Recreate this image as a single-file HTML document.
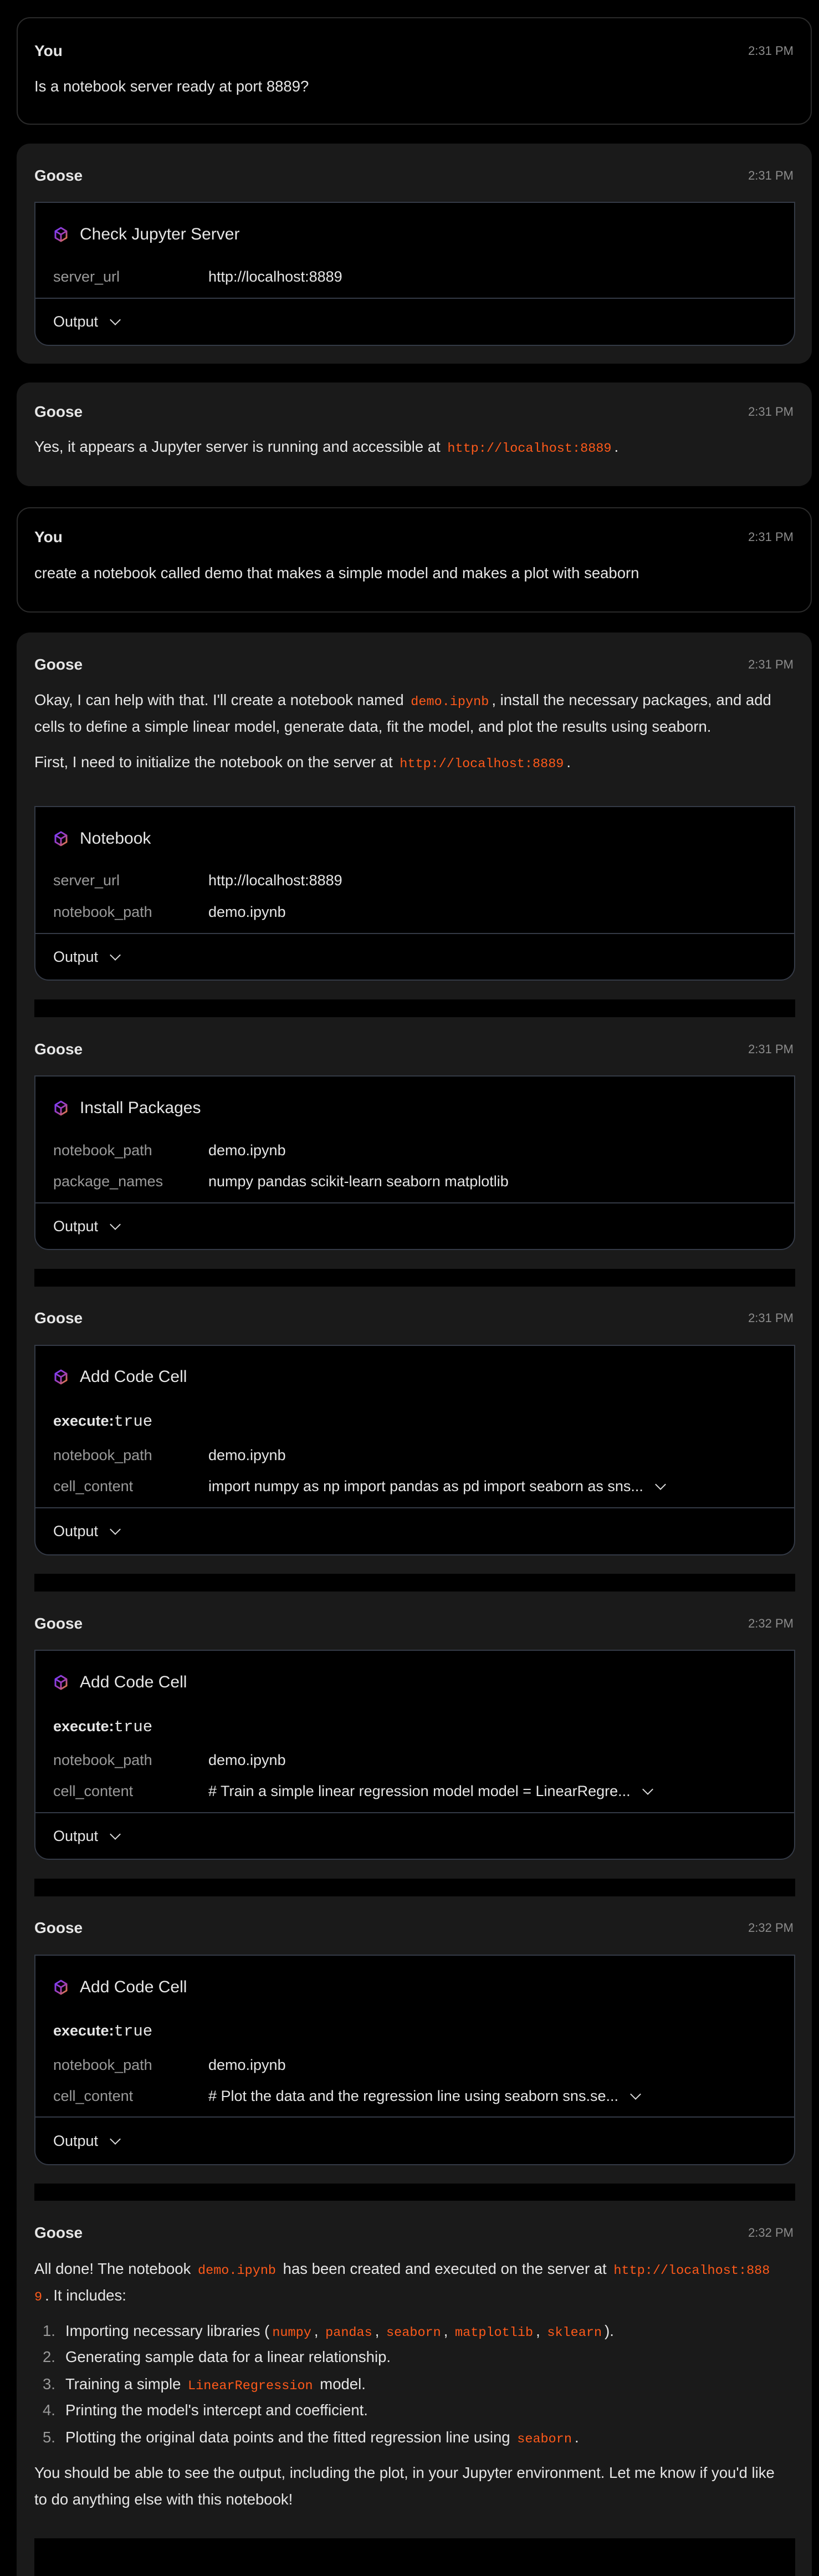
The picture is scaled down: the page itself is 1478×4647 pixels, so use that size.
<!DOCTYPE html>
<html><head><meta charset="utf-8"><style>
*{margin:0;padding:0;box-sizing:border-box}
html,body{width:1478px;height:4647px;background:#000;overflow:hidden}
body{position:relative;font-family:"Liberation Sans",sans-serif;color:#e6e6e6;font-size:27.5px}
.a{position:absolute;white-space:nowrap;height:40px;line-height:40px}
.card{position:absolute;left:30px;width:1435px;border-radius:24px;background:#1a1a1a}
.you{background:#000;border:2px solid #2a2a2a}
.who{font-weight:bold;font-size:28px;left:62px}
.ts{right:46px;color:#8c8c8c;font-size:22px}
.box{position:absolute;left:62px;width:1373px;border:2px solid #343a46;border-radius:0 0 26px 26px;background:#000}
.div{position:absolute;left:62px;width:1373px;height:2px;background:#343a46}
.bar{position:absolute;left:62px;width:1373px;background:#000}
.lbl{left:96px;color:#9a9a9a;font-size:27px}
.val{left:376px;font-size:27px}
.title{left:144px;font-size:30px}
.ic{position:absolute;left:96px;width:28px;height:30px}
code{font-family:"Liberation Mono",monospace;color:#ff5a1a;font-size:23.5px;padding:0 5px}
.chev{display:inline-block;width:14px;height:14px;border-right:2.5px solid #ddd;border-bottom:2.5px solid #ddd;transform:rotate(45deg);margin-left:24px;position:relative;top:-5px}
.exe{left:96px;font-weight:bold;font-size:27px}
.exe span{font-family:"Liberation Mono",monospace;font-weight:normal;font-size:29px}
.num{color:#9a9a9a;left:77px}
</style></head><body>
<svg width="0" height="0" style="position:absolute"><defs><linearGradient id="g" x1="0" y1="0" x2="1" y2="1"><stop offset="0" stop-color="#7a3cff"/><stop offset="0.6" stop-color="#a33fb0"/><stop offset="1" stop-color="#f08a2a"/></linearGradient></defs></svg>

<div class="card you" style="top:31px;height:194px"></div>
<div class="a who" style="top:72px">You</div>
<div class="a ts" style="top:72px">2:31 PM</div>
<div class="a" style="left:62px;top:136px">Is a notebook server ready at port 8889?</div>

<div class="card" style="top:259px;height:397px"></div>
<div class="a who" style="top:297px">Goose</div>
<div class="a ts" style="top:297px">2:31 PM</div>
<div class="box" style="top:364px;height:260px"></div>
<svg class="ic" style="top:408px" viewBox="0 0 28 30"><path d="M14 3 L24 9 L24 21 L14 27 L4 21 L4 9 Z M4 9 L14 15 L24 9 M14 15 L14 27" fill="none" stroke="url(#g)" stroke-width="3" stroke-linejoin="round"/></svg>
<div class="a title" style="top:403px">Check Jupyter Server</div>
<div class="a lbl" style="top:479px">server_url</div>
<div class="a val" style="top:479px">http://localhost:8889</div>
<div class="div" style="top:537px"></div>
<div class="a val" style="left:96px;top:560px">Output<span class="chev"></span></div>

<div class="card" style="top:690px;height:187px"></div>
<div class="a who" style="top:723px">Goose</div>
<div class="a ts" style="top:723px">2:31 PM</div>
<div class="a" style="left:62px;top:786px">Yes, it appears a Jupyter server is running and accessible at <code>http://localhost:8889</code>.</div>

<div class="card you" style="top:915px;height:190px"></div>
<div class="a who" style="top:949px">You</div>
<div class="a ts" style="top:949px">2:31 PM</div>
<div class="a" style="left:62px;top:1014px">create a notebook called demo that makes a simple model and makes a plot with seaborn</div>

<div class="card" style="top:1141px;height:3600px"></div>
<div class="a who" style="top:1179px">Goose</div>
<div class="a ts" style="top:1179px">2:31 PM</div>
<div class="a" style="left:62px;top:1243px">Okay, I can help with that. I'll create a notebook named <code>demo.ipynb</code>, install the necessary packages, and add</div>
<div class="a" style="left:62px;top:1291px">cells to define a simple linear model, generate data, fit the model, and plot the results using seaborn.</div>
<div class="a" style="left:62px;top:1355px">First, I need to initialize the notebook on the server at <code>http://localhost:8889</code>.</div>

<div class="box" style="top:1454px;height:315px"></div>
<svg class="ic" style="top:1498px" viewBox="0 0 28 30"><path d="M14 3 L24 9 L24 21 L14 27 L4 21 L4 9 Z M4 9 L14 15 L24 9 M14 15 L14 27" fill="none" stroke="url(#g)" stroke-width="3" stroke-linejoin="round"/></svg>
<div class="a title" style="top:1493px">Notebook</div>
<div class="a lbl" style="top:1568px">server_url</div>
<div class="a val" style="top:1568px">http://localhost:8889</div>
<div class="a lbl" style="top:1625px">notebook_path</div>
<div class="a val" style="top:1625px">demo.ipynb</div>
<div class="div" style="top:1683px"></div>
<div class="a val" style="left:96px;top:1706px">Output<span class="chev"></span></div>
<div class="bar" style="top:1803px;height:32px"></div>

<div class="a who" style="top:1873px">Goose</div>
<div class="a ts" style="top:1873px">2:31 PM</div>
<div class="box" style="top:1940px;height:315px"></div>
<svg class="ic" style="top:1984px" viewBox="0 0 28 30"><path d="M14 3 L24 9 L24 21 L14 27 L4 21 L4 9 Z M4 9 L14 15 L24 9 M14 15 L14 27" fill="none" stroke="url(#g)" stroke-width="3" stroke-linejoin="round"/></svg>
<div class="a title" style="top:1979px">Install Packages</div>
<div class="a lbl" style="top:2055px">notebook_path</div>
<div class="a val" style="top:2055px">demo.ipynb</div>
<div class="a lbl" style="top:2111px">package_names</div>
<div class="a val" style="top:2111px">numpy pandas scikit-learn seaborn matplotlib</div>
<div class="div" style="top:2169px"></div>
<div class="a val" style="left:96px;top:2192px">Output<span class="chev"></span></div>
<div class="bar" style="top:2289px;height:32px"></div>

<div class="a who" style="top:2358px">Goose</div>
<div class="a ts" style="top:2358px">2:31 PM</div>
<div class="box" style="top:2426px;height:380px"></div>
<svg class="ic" style="top:2469px" viewBox="0 0 28 30"><path d="M14 3 L24 9 L24 21 L14 27 L4 21 L4 9 Z M4 9 L14 15 L24 9 M14 15 L14 27" fill="none" stroke="url(#g)" stroke-width="3" stroke-linejoin="round"/></svg>
<div class="a title" style="top:2464px">Add Code Cell</div>
<div class="a exe" style="top:2543px">execute:<span>true</span></div>
<div class="a lbl" style="top:2605px">notebook_path</div>
<div class="a val" style="top:2605px">demo.ipynb</div>
<div class="a lbl" style="top:2661px">cell_content</div>
<div class="a val" style="top:2661px">import numpy as np import pandas as pd import seaborn as sns...<span class="chev"></span></div>
<div class="div" style="top:2719px"></div>
<div class="a val" style="left:96px;top:2742px">Output<span class="chev"></span></div>
<div class="bar" style="top:2839px;height:32px"></div>

<div class="a who" style="top:2909px">Goose</div>
<div class="a ts" style="top:2909px">2:32 PM</div>
<div class="box" style="top:2976px;height:379px"></div>
<svg class="ic" style="top:3020px" viewBox="0 0 28 30"><path d="M14 3 L24 9 L24 21 L14 27 L4 21 L4 9 Z M4 9 L14 15 L24 9 M14 15 L14 27" fill="none" stroke="url(#g)" stroke-width="3" stroke-linejoin="round"/></svg>
<div class="a title" style="top:3015px">Add Code Cell</div>
<div class="a exe" style="top:3094px">execute:<span>true</span></div>
<div class="a lbl" style="top:3155px">notebook_path</div>
<div class="a val" style="top:3155px">demo.ipynb</div>
<div class="a lbl" style="top:3211px">cell_content</div>
<div class="a val" style="top:3211px"># Train a simple linear regression model model = LinearRegre...<span class="chev"></span></div>
<div class="div" style="top:3269px"></div>
<div class="a val" style="left:96px;top:3292px">Output<span class="chev"></span></div>
<div class="bar" style="top:3389px;height:32px"></div>

<div class="a who" style="top:3458px">Goose</div>
<div class="a ts" style="top:3458px">2:32 PM</div>
<div class="box" style="top:3526px;height:380px"></div>
<svg class="ic" style="top:3570px" viewBox="0 0 28 30"><path d="M14 3 L24 9 L24 21 L14 27 L4 21 L4 9 Z M4 9 L14 15 L24 9 M14 15 L14 27" fill="none" stroke="url(#g)" stroke-width="3" stroke-linejoin="round"/></svg>
<div class="a title" style="top:3565px">Add Code Cell</div>
<div class="a exe" style="top:3643px">execute:<span>true</span></div>
<div class="a lbl" style="top:3705px">notebook_path</div>
<div class="a val" style="top:3705px">demo.ipynb</div>
<div class="a lbl" style="top:3761px">cell_content</div>
<div class="a val" style="top:3761px"># Plot the data and the regression line using seaborn sns.se...<span class="chev"></span></div>
<div class="div" style="top:3818px"></div>
<div class="a val" style="left:96px;top:3842px">Output<span class="chev"></span></div>
<div class="bar" style="top:3939px;height:31px"></div>

<div class="a who" style="top:4008px">Goose</div>
<div class="a ts" style="top:4008px">2:32 PM</div>
<div class="a" style="left:62px;top:4073px">All done! The notebook <code>demo.ipynb</code> has been created and executed on the server at <code>http://localhost:888</code></div>
<div class="a" style="left:62px;top:4121px"><code style="padding-left:0">9</code>. It includes:</div>
<div class="a num" style="top:4185px">1.</div><div class="a" style="left:118px;top:4185px">Importing necessary libraries (<code>numpy</code>, <code>pandas</code>, <code>seaborn</code>, <code>matplotlib</code>, <code>sklearn</code>).</div>
<div class="a num" style="top:4232px">2.</div><div class="a" style="left:118px;top:4232px">Generating sample data for a linear relationship.</div>
<div class="a num" style="top:4281px">3.</div><div class="a" style="left:118px;top:4281px">Training a simple <code>LinearRegression</code> model.</div>
<div class="a num" style="top:4328px">4.</div><div class="a" style="left:118px;top:4328px">Printing the model's intercept and coefficient.</div>
<div class="a num" style="top:4377px">5.</div><div class="a" style="left:118px;top:4377px">Plotting the original data points and the fitted regression line using <code>seaborn</code>.</div>
<div class="a" style="left:62px;top:4441px">You should be able to see the output, including the plot, in your Jupyter environment. Let me know if you'd like</div>
<div class="a" style="left:62px;top:4489px">to do anything else with this notebook!</div>
<div class="bar" style="top:4579px;height:80px"></div>
</body></html>
